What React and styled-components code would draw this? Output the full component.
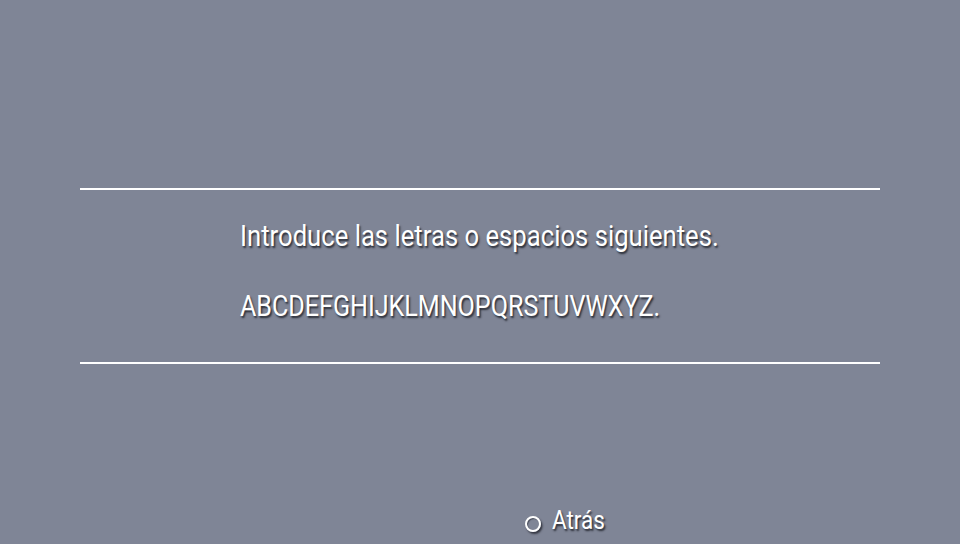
import React from "react";
import styled, { createGlobalStyle } from "styled-components";

const Global = createGlobalStyle`
  html, body { margin: 0; padding: 0; background: #7f8596; }
  body { width: 960px; height: 544px; overflow: hidden; font-family: Roboto, "Noto Sans", sans-serif; }
`;

const Screen = styled.div`
  width: 960px;
  height: 544px;
  display: flex;
  flex-direction: column;
  background: #7f8596;
  color: #ffffff;
  padding-top: 188px;
  box-sizing: border-box;
`;

const Rule = styled.div`
  width: 800px;
  height: 2px;
  margin: 0 auto;
  background: #ffffff;
`;

const Body = styled.div`
  width: 800px;
  margin: 0 auto;
  box-sizing: border-box;
  padding: 29px 0 39px 160px;
  display: flex;
  flex-direction: column;
  gap: 36px;
`;

const Line = styled.div`
  font-size: 29px;
  line-height: 34px;
  height: 34px;
  white-space: nowrap;
  transform: scaleX(${(p) => p.$sx});
  transform-origin: left center;
  text-shadow: 1.5px 2px 2px rgba(20, 22, 30, 0.8);
`;

const Footer = styled.div`
  margin-top: auto;
  height: 46px;
  display: flex;
  align-items: center;
  padding-left: 525px;
  gap: 11px;
`;

const Circle = styled.div`
  width: 12px;
  height: 12px;
  border: 2.5px solid #ffffff;
  border-radius: 50%;
  box-shadow: 1.5px 2px 2px rgba(20, 22, 30, 0.7), inset 1px 1px 1px rgba(20,22,30,0.5);
  margin-top: 5px;
`;

const Label = styled.span`
  font-size: 25px;
  line-height: 30px;
  display: inline-block;
  transform: scaleX(0.9);
  transform-origin: left center;
  text-shadow: 1.5px 2px 2px rgba(20, 22, 30, 0.8);
`;

export default function App() {
  return (
    <>
      <Global />
      <Screen>
        <Rule />
        <Body>
          <Line $sx={0.885}>Introduce las letras o espacios siguientes.</Line>
          <Line $sx={0.865}>ABCDEFGHIJKLMNOPQRSTUVWXYZ.</Line>
        </Body>
        <Rule />
        <Footer>
          <Circle />
          <Label>Atrás</Label>
        </Footer>
      </Screen>
    </>
  );
}
